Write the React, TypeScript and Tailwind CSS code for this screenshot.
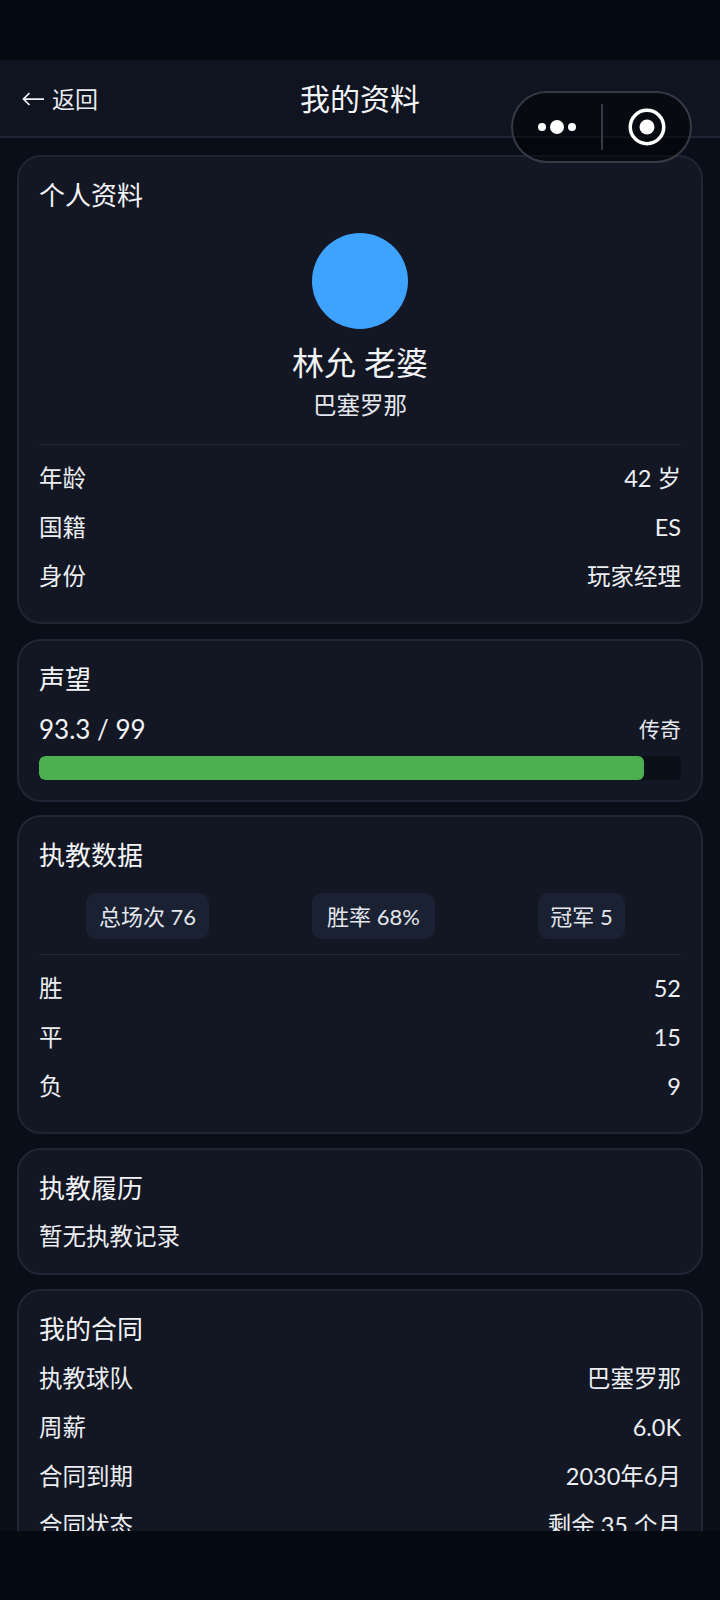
const font = "font-['Lato','Noto_Sans_CJK_SC',sans-serif]";

function Row({ label, value }: { label: string; value: string }) {
  return (
    <div className="flex h-[49px] items-center justify-between text-[23.5px] text-[#eceef2]">
      <span>{label}</span>
      <span>{value}</span>
    </div>
  );
}

function Card({ className, children }: { className: string; children: React.ReactNode }) {
  return (
    <div className={`mx-[17px] rounded-[24px] border-2 border-[#1f2535] bg-[#121723] px-[20px] pt-[20px] ${className}`}>
      {children}
    </div>
  );
}

function Title({ children }: { children: React.ReactNode }) {
  return <div className="text-[26px] leading-[36px] text-[#f2f3f7]">{children}</div>;
}

function Chip({ className, children }: { className: string; children: React.ReactNode }) {
  return (
    <div className={`flex h-[46px] items-center justify-center rounded-[10px] bg-[#1a2132] text-[22px] text-[#e4e7ed] ${className}`}>
      {children}
    </div>
  );
}

export default function App() {
  return (
    <div className={`relative h-[1600px] w-[720px] overflow-hidden bg-[#0a0e18] ${font}`}>
      <div className="h-[60px] bg-[#050912]" />
      <div className="relative flex h-[78px] items-center justify-center border-b-2 border-[#1f2535] bg-[#0f1420]">
        <div className="absolute left-[22px] top-[21px] flex items-center gap-[8px] text-[23px] leading-[36px] text-[#e8eaf0]">
          <svg width="22" height="14" viewBox="0 0 22 14" fill="none" stroke="#f0f1f5" strokeWidth="1.75">
            <path d="M22 7H1.5M7.5 1 1.5 7l6 6" />
          </svg>
          <span>返回</span>
        </div>
        <div className="text-[30px] text-[#f2f3f7]">我的资料</div>
      </div>

      <Card className="mt-[17px] h-[469px]">
        <Title>个人资料</Title>
        <div className="mt-[20px] flex flex-col items-center">
          <div className="h-[96px] w-[96px] rounded-full bg-[#3ea2ff]" />
          <div className="mt-[11px] text-[32px] leading-[46px] text-[#f2f3f7]">林允 老婆</div>
          <div className="mt-[2px] text-[23.5px] leading-[34px] text-[#e4e7ed]">巴塞罗那</div>
        </div>
        <div className="mt-[22px] border-t border-[#232a3a] pt-[9px]">
          <Row label="年龄" value="42 岁" />
          <Row label="国籍" value="ES" />
          <Row label="身份" value="玩家经理" />
        </div>
      </Card>

      <Card className="mt-[15px] h-[163px]">
        <Title>声望</Title>
        <div className="mt-[13px] flex items-center justify-between">
          <span className="text-[26px] leading-[38px] text-[#f2f3f7]">93.3 / 99</span>
          <span className="text-[21px] text-[#e4e7ed]">传奇</span>
        </div>
        <div className="mt-[8px] h-[24px] overflow-hidden rounded-[6px] bg-[#0b0f18]">
          <div className="h-full w-[94.2%] rounded-[6px] bg-[#4caf50]" />
        </div>
      </Card>

      <Card className="mt-[13px] h-[319px]">
        <Title>执教数据</Title>
        <div className="mt-[20px] flex gap-[103px] pl-[47px]">
          <Chip className="w-[123px]">总场次 76</Chip>
          <Chip className="w-[123px]">胜率 68%</Chip>
          <Chip className="w-[87px]">冠军 5</Chip>
        </div>
        <div className="mt-[15px] border-t border-[#232a3a] pt-[9px]">
          <Row label="胜" value="52" />
          <Row label="平" value="15" />
          <Row label="负" value="9" />
        </div>
      </Card>

      <Card className="mt-[14px] h-[127px]">
        <Title>执教履历</Title>
        <div className="mt-[12px] text-[23.5px] leading-[36px] text-[#eceef2]">暂无执教记录</div>
      </Card>

      <Card className="mt-[14px] h-[400px]">
        <Title>我的合同</Title>
        <div className="mt-[7px]">
          <Row label="执教球队" value="巴塞罗那" />
          <Row label="周薪" value="6.0K" />
          <Row label="合同到期" value="2030年6月" />
          <Row label="合同状态" value="剩余 35 个月" />
        </div>
      </Card>

      <div className="absolute bottom-0 left-0 h-[69px] w-full bg-[#050912]" />

      <div className="absolute left-[511px] top-[91px] flex h-[72px] w-[181px] items-center rounded-full border-2 border-[#363a44] bg-black/50">
        <div className="flex w-[88px] items-center justify-center gap-[4px]">
          <span className="h-[8px] w-[8px] rounded-full bg-white" />
          <span className="h-[14px] w-[14px] rounded-full bg-white" />
          <span className="h-[8px] w-[8px] rounded-full bg-white" />
        </div>
        <div className="h-[46px] w-[2px] bg-[#363a44]" />
        <div className="flex flex-1 items-center justify-center">
          <svg width="38" height="38" viewBox="0 0 38 38">
            <circle cx="19" cy="19" r="16.75" fill="none" stroke="#fff" strokeWidth="3.5" />
            <circle cx="19" cy="19" r="7.5" fill="#fff" />
          </svg>
        </div>
      </div>
    </div>
  );
}
